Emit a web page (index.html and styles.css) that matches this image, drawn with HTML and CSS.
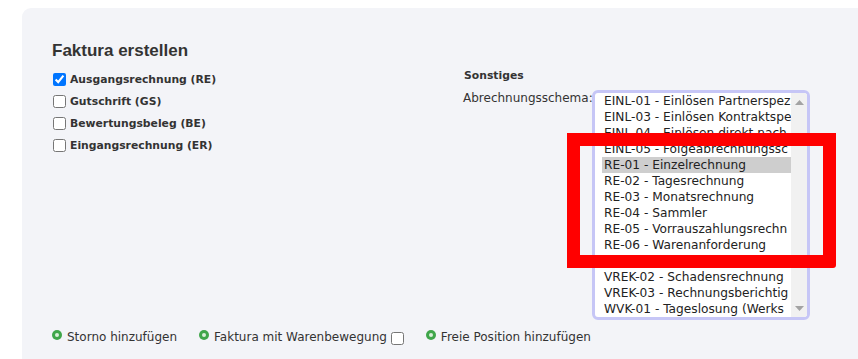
FILE: index.html
```html
<!DOCTYPE html>
<html lang="de">
<head>
<meta charset="utf-8">
<title>Faktura erstellen</title>
<link rel="stylesheet" href="styles.css">
</head>
<body>
<div class="panel">
  <div class="top">
    <div class="left">
      <h2 class="title">Faktura erstellen</h2>
      <label class="chk"><input type="checkbox" checked><span>Ausgangsrechnung (RE)</span></label>
      <label class="chk"><input type="checkbox"><span>Gutschrift (GS)</span></label>
      <label class="chk"><input type="checkbox"><span>Bewertungsbeleg (BE)</span></label>
      <label class="chk"><input type="checkbox"><span>Eingangsrechnung (ER)</span></label>
    </div>
    <div class="right">
      <div class="section">Sonstiges</div>
      <div class="field">
        <span class="field-label">Abrechnungsschema:</span>
        <div class="listbox">
          <div class="options">
            <div class="opt">EINL-01 - Einlösen Partnerspez</div>
            <div class="opt">EINL-03 - Einlösen Kontraktspe</div>
            <div class="opt">EINL-04 - Einlösen direkt nach</div>
            <div class="opt">EINL-05 - Folgeabrechnungssc</div>
            <div class="opt sel">RE-01 - Einzelrechnung</div>
            <div class="opt">RE-02 - Tagesrechnung</div>
            <div class="opt">RE-03 - Monatsrechnung</div>
            <div class="opt">RE-04 - Sammler</div>
            <div class="opt">RE-05 - Vorrauszahlungsrechn</div>
            <div class="opt">RE-06 - Warenanforderung</div>
            <div class="opt">VREK-01 - Rechnungskorrektur</div>
            <div class="opt">VREK-02 - Schadensrechnung</div>
            <div class="opt">VREK-03 - Rechnungsberichtig</div>
            <div class="opt">WVK-01 - Tageslosung (Werks</div>
          </div>
          <div class="scroll">
            <svg class="arrow" width="9" height="5" viewBox="0 0 9 5"><path d="M0 5 L4.5 0 L9 5 Z" fill="#a3a3a3"/></svg>
            <svg class="arrow" width="9" height="5" viewBox="0 0 9 5"><path d="M0 0 L4.5 5 L9 0 Z" fill="#a3a3a3"/></svg>
          </div>
        </div>
      </div>
    </div>
  </div>
  <div class="actions">
    <span class="act"><svg width="10" height="10" viewBox="0 0 10 10"><circle cx="5" cy="5" r="5" fill="#3fa64a"/><circle cx="5" cy="5" r="2" fill="#d9efd9"/></svg>Storno hinzufügen</span>
    <span class="act"><svg width="10" height="10" viewBox="0 0 10 10"><circle cx="5" cy="5" r="5" fill="#3fa64a"/><circle cx="5" cy="5" r="2" fill="#d9efd9"/></svg>Faktura mit Warenbewegung<input type="checkbox" class="act-chk"></span>
    <span class="act"><svg width="10" height="10" viewBox="0 0 10 10"><circle cx="5" cy="5" r="5" fill="#3fa64a"/><circle cx="5" cy="5" r="2" fill="#d9efd9"/></svg>Freie Position hinzufügen</span>
  </div>
</div>
<div class="mark"></div>
</body>
</html>
```

FILE: styles.css
```css
html, body {
  margin: 0;
  padding: 0;
  background: #ffffff;
  overflow: hidden;
}
body {
  width: 858px;
  height: 359px;
  position: relative;
  font-family: "DejaVu Sans", Verdana, sans-serif;
  color: #333333;
}
.panel {
  margin: 8px 0 0 22px;
  height: 351px;
  background: #f3f4f8;
  border-top-left-radius: 9px;
  box-sizing: border-box;
  padding: 0 0 0 30px;
  display: flex;
  flex-direction: column;
}
.top {
  display: flex;
}
.left {
  width: 412px;
  padding-top: 33px;
}
.title {
  margin: 0 0 7px 0;
  font-family: "Liberation Sans", Arial, sans-serif;
  font-size: 17px;
  font-weight: bold;
  line-height: 20px;
  color: #333333;
}
.chk {
  display: flex;
  align-items: center;
  height: 22px;
  font-size: 10.8px;
  font-weight: bold;
  color: #333333;
}
.chk input {
  margin: 0 4px 0 1px;
  width: 13px;
  height: 13px;
}
.right {
  padding-top: 61px;
}
.section {
  font-size: 10.8px;
  font-weight: bold;
  line-height: 14px;
  height: 22px;
}
.field {
  display: flex;
  align-items: flex-start;
}
.field-label {
  font-size: 12px;
  line-height: 14px;
  margin-left: -1px;
  width: 129px;
  white-space: nowrap;
}
.listbox {
  margin-top: -1px;
  width: 212px;
  height: 224px;
  border: 3px solid #c6c6f6;
  border-radius: 6px;
  background: #ffffff;
  display: flex;
  overflow: hidden;
}
.options {
  flex: 1;
  overflow: hidden;
}
.opt {
  height: 16px;
  line-height: 16px;
  font-size: 12.2px;
  white-space: nowrap;
  overflow: hidden;
  padding-left: 9px;
  color: #222222;
}
.opt.sel {
  background: #cecece;
  margin: 0 0 0 7px;
  padding-left: 2px;
}
.scroll {
  width: 16px;
  background: #f1f1f1;
  display: flex;
  flex-direction: column;
  justify-content: space-between;
  align-items: center;
  padding: 7px 0 6px;
  box-sizing: border-box;
}
.arrow {
  display: block;
}
.actions {
  margin-top: auto;
  margin-bottom: 14px;
  display: flex;
  align-items: center;
  font-size: 12px;
  color: #333333;
}
.act {
  display: flex;
  align-items: center;
  margin-right: 22px;
}
.act svg {
  margin-right: 5px;
  margin-top: -3px;
}
.act-chk {
  margin: 4px 0 0 4px;
  width: 13px;
  height: 13px;
}
.mark {
  position: absolute;
  left: 567px;
  top: 133px;
  width: 269px;
  height: 135px;
  box-sizing: border-box;
  border: 13px solid #ff0000;
  border-radius: 0 0 3px 0;
}
```
